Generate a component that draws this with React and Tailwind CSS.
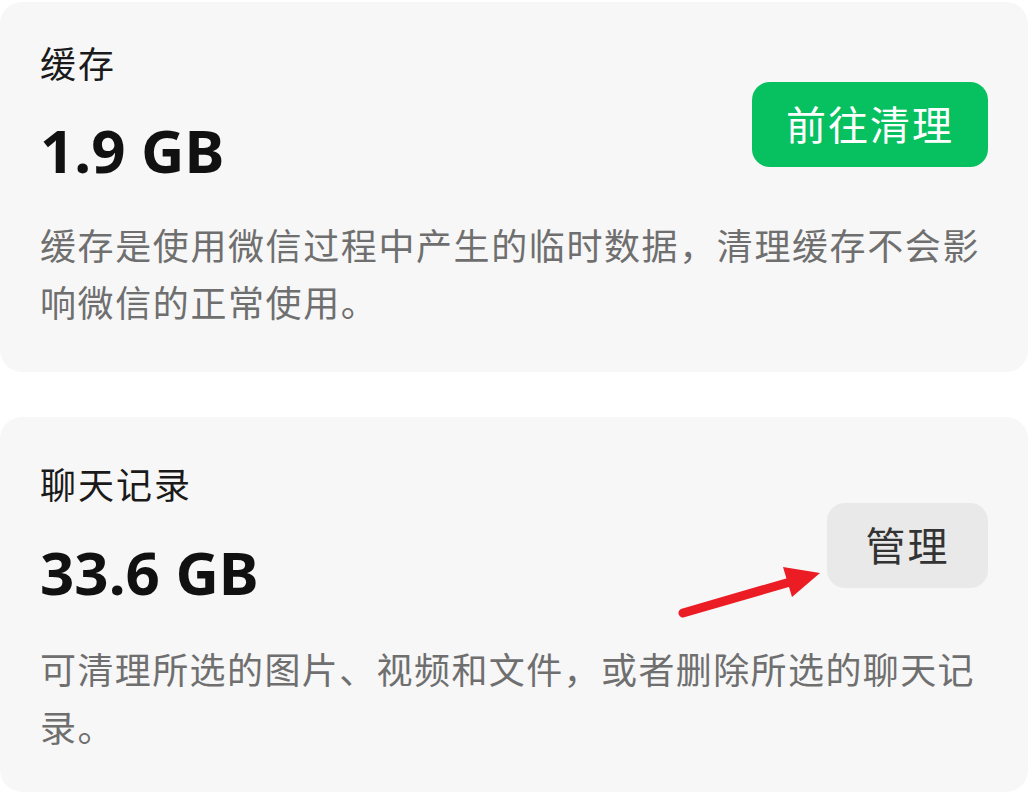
import React from "react";

const CJK = { fontFamily: '"Noto Sans", "Noto Sans CJK SC", sans-serif' };

function Card({ title, size, desc, button, cardClass, sizeClass, children }) {
  return (
    <div className={"relative bg-[#f7f7f7] rounded-[22px] pl-10 pr-10 " + cardClass}>
      <div className="flex items-start justify-between">
        <div className="flex flex-col">
          <div className="text-[36px] leading-[48px] tracking-[2px] text-[#1a1a1a]">{title}</div>
          <div className={"text-[60px] leading-[64px] font-bold text-[#111111] " + sizeClass}>{size}</div>
        </div>
        {button}
      </div>
      {desc}
      {children}
    </div>
  );
}

export default function App() {
  return (
    <div className="w-[1032px] h-[800px] bg-white overflow-hidden" style={CJK}>
      <div className="pt-[2px] pr-[4px] flex flex-col gap-[45px]">
        <Card
          title="缓存"
          size="1.9 GB"
          cardClass="pt-[39px] pb-[40px]"
          sizeClass="mt-[29px]"
          button={
            <div className="mt-[41px] w-[236px] h-[85px] rounded-[18px] bg-[#07c160] flex items-center justify-center text-white text-[40px] tracking-[2px] leading-none">
              前往清理
            </div>
          }
          desc={
            <p className="mt-[36px] text-[36px] leading-[57px] tracking-[1.6px] text-[#6f6f6f]">
              缓存是使用微信过程中产生的临时数据，清理缓存不会影响微信的正常使用。
            </p>
          }
        />
        <Card
          title="聊天记录"
          size="33.6 GB"
          cardClass="pt-[45px] pb-[34px]"
          sizeClass="mt-[30px]"
          button={
            <div className="mt-[41px] w-[161px] h-[85px] rounded-[18px] bg-[#e9e9e9] flex items-center justify-center text-[#333333] text-[40px] tracking-[2px] leading-none">
              管理
            </div>
          }
          desc={
            <p className="mt-[38px] text-[36px] leading-[58px] tracking-[1.4px] text-[#6f6f6f]">
              可清理所选的图片、视频和文件，或者删除所选的聊天记录。
            </p>
          }
        >
          <svg
            className="absolute left-[670px] top-[140px]"
            width="160"
            height="80"
            viewBox="0 0 160 80"
          >
            <line x1="13" y1="56" x2="120" y2="25" stroke="#ec1c24" strokeWidth="9" strokeLinecap="round" />
            <polygon points="113,10 150,16 122,40" fill="#ec1c24" />
          </svg>
        </Card>
      </div>
    </div>
  );
}
